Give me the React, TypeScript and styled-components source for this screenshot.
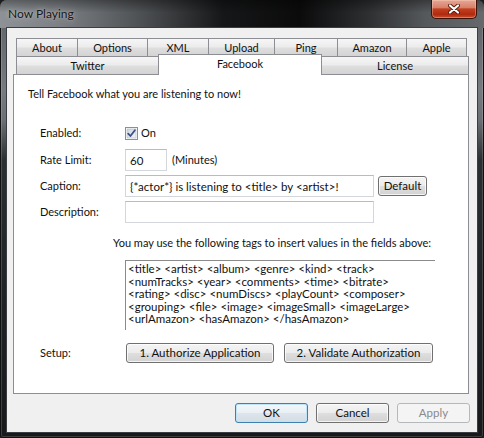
import React from "react";
import styled, { createGlobalStyle, css } from "styled-components";

const UI_FONT = `Lato, "Noto Sans", "DejaVu Sans", sans-serif`;

const Global = createGlobalStyle`
  html, body { margin: 0; padding: 0; background: #1b1d1f; }
  body {
    width: 484px;
    height: 438px;
    overflow: hidden;
    font-family: ${UI_FONT};
    font-size: 11px;
    color: #000;
  }
  #root { width: 484px; height: 438px; }
`;

const Window = styled.div`
  width: 484px;
  height: 438px;
  box-sizing: border-box;
  display: flex;
  flex-direction: column;
  border-radius: 7px 7px 3px 3px;
  overflow: hidden;
  background: linear-gradient(
    to bottom,
    #5b5f63 0px,
    #777b7f 90px,
    #6c7074 120px,
    #2c2f32 160px,
    #1f2225 300px,
    #17191b 438px
  );
  box-shadow: inset 0 0 0 1px #0e1012, inset 0 0 0 2px rgba(255, 255, 255, 0.16);
`;

const TitleBar = styled.div`
  height: 28px;
  flex: none;
  display: flex;
  align-items: flex-start;
  justify-content: space-between;
  padding: 0 7px 0 8px;
  background:
    linear-gradient(to bottom, rgba(0, 0, 0, 0.35) 0%, rgba(0, 0, 0, 0) 45%),
    linear-gradient(
      to right,
      #8e9296 0%,
      #7d8185 12%,
      #4b4e51 30%,
      #161718 46%,
      #0b0b0c 62%,
      #2d2f31 76%,
      #56595c 88%,
      #66696c 100%
    );
`;

const Caption = styled.div`
  margin-top: 6px;
  font-size: 12px;
  line-height: 16px;
  color: #151515;
  text-shadow: 0 0 6px rgba(255, 255, 255, 0.45), 0 0 2px rgba(255, 255, 255, 0.35);
`;

const CloseButton = styled.div`
  width: 46px;
  height: 19px;
  box-sizing: border-box;
  display: flex;
  align-items: center;
  justify-content: center;
  border: 1px solid #3a1208;
  border-top: none;
  border-radius: 0 0 5px 5px;
  background: linear-gradient(
    to bottom,
    #e6a896 0%,
    #d8806a 42%,
    #c2401f 50%,
    #b02a0f 80%,
    #c9502f 100%
  );
  box-shadow: inset 0 0 0 1px rgba(255, 220, 200, 0.35);
`;

const Client = styled.div`
  flex: 1;
  margin: 0 7px 6px 7px;
  background: #f0f0f0;
  display: flex;
  flex-direction: column;
  padding-top: 10px;
  box-shadow: 0 0 0 1px #3a3e42;
`;

const TabStrip = styled.div`
  margin-left: 9px;
  display: flex;
  flex-direction: column;
`;

const TabRow = styled.div`
  display: flex;
  height: 18px;
`;

const Tab = styled.div<{ $w: number; $active?: boolean }>`
  width: ${(p) => p.$w}px;
  box-sizing: border-box;
  flex: none;
  margin-left: -1px;
  &:first-child { margin-left: 0; }
  border: 1px solid #8c8e94;
  border-bottom: none;
  display: flex;
  align-items: center;
  justify-content: center;
  font-size: 11px;
  line-height: 14px;
  padding-top: 1px;
  color: #111;
  background: linear-gradient(
    to bottom,
    #f6f6f6 0%,
    #ececec 45%,
    #dedede 55%,
    #d3d3d3 100%
  );
  ${(p) =>
    p.$active &&
    css`
      position: relative;
      z-index: 2;
      background: #fff;
      margin-top: -2px;
      height: 21px;
      padding-bottom: 4px;
    `}
`;

const Panel = styled.div`
  margin-left: 6px;
  width: 456px;
  height: 320px;
  box-sizing: border-box;
  border: 1px solid #8c8e94;
  background: #fff;
  padding: 11px 0 0 14px;
  display: flex;
  flex-direction: column;
  color: #111;
`;

const Text = styled.div<{ $indent?: number; $mt?: number }>`
  font-size: 11px;
  line-height: 16px;
  margin-left: ${(p) => p.$indent ?? 0}px;
  margin-top: ${(p) => p.$mt ?? 0}px;
  white-space: nowrap;
`;

const Row = styled.div<{ $mt: number; $h?: number }>`
  display: flex;
  align-items: center;
  height: ${(p) => p.$h ?? 22}px;
  margin-top: ${(p) => p.$mt}px;
  padding-left: 12px;
`;

const Label = styled.div`
  width: 85px;
  flex: none;
  font-size: 11px;
  line-height: 16px;
`;

const Inline = styled.span<{ $ml: number }>`
  margin-left: ${(p) => p.$ml}px;
  font-size: 11px;
  line-height: 16px;
`;

const Field = styled.div<{ $w: number }>`
  width: ${(p) => p.$w}px;
  height: 22px;
  box-sizing: border-box;
  border: 1px solid #d3d6da;
  border-top-color: #b8bbc0;
  background: #fff;
  padding-left: 4px;
  display: flex;
  align-items: center;
  font-size: 11.5px;
  white-space: nowrap;
  overflow: hidden;
`;

const TagBox = styled.div`
  margin: 9px 0 0 97px;
  width: 310px;
  height: 70px;
  box-sizing: border-box;
  border-top: 1px solid #8a8a8a;
  border-left: 1px solid #8a8a8a;
  padding: 2px 0 0 2px;
  font-size: 11.5px;
  line-height: 12.6px;
  white-space: pre;
  overflow: hidden;
`;

const Button = styled.div<{ $w: number; $ml?: number; $variant?: "default" | "disabled" }>`
  width: ${(p) => p.$w}px;
  height: 20px;
  margin-left: ${(p) => p.$ml ?? 0}px;
  flex: none;
  box-sizing: border-box;
  border: 1px solid #707070;
  border-radius: 3px;
  display: flex;
  align-items: center;
  justify-content: center;
  font-size: 11.5px;
  line-height: 14px;
  color: #111;
  background: linear-gradient(
    to bottom,
    #f4f4f4 0%,
    #ececec 48%,
    #dedede 52%,
    #d2d2d2 100%
  );
  box-shadow: inset 0 0 0 1px rgba(255, 255, 255, 0.75);
  ${(p) =>
    p.$variant === "default" &&
    css`
      border-color: #3c7fb1;
      background: linear-gradient(
        to bottom,
        #f3f7fa 0%,
        #e9eff3 48%,
        #dde5eb 52%,
        #d3dde4 100%
      );
      box-shadow: inset 0 0 0 1px #bfe3f8;
    `}
  ${(p) =>
    p.$variant === "disabled" &&
    css`
      border-color: #b5b9bc;
      background: #f4f4f4;
      color: #8a8a8a;
      box-shadow: none;
    `}
`;

const Footer = styled.div`
  display: flex;
  justify-content: flex-end;
  gap: 8px;
  margin-top: 9px;
  padding-right: 7px;
`;

const CheckBox = () => (
  <svg width="13" height="13" viewBox="0 0 13 13">
    <defs>
      <linearGradient id="cbFill" x1="0" y1="0" x2="1" y2="1">
        <stop offset="0" stopColor="#cdd6e0" />
        <stop offset="1" stopColor="#f2f5f8" />
      </linearGradient>
    </defs>
    <rect x="0.5" y="0.5" width="12" height="12" fill="#fff" stroke="#8e8f8f" />
    <rect x="2" y="2" width="9" height="9" fill="url(#cbFill)" stroke="#b0b8c2" strokeWidth="0.6" />
    <path d="M3.2 6.6 L5.4 9 L9.9 3.2" fill="none" stroke="#3d4f86" strokeWidth="1.8" strokeLinecap="round" strokeLinejoin="round" />
  </svg>
);

const CloseGlyph = () => (
  <svg width="12" height="10" viewBox="0 0 12 10">
    <path d="M2 1.5 L10 8.5 M10 1.5 L2 8.5" stroke="#5a1a0c" strokeWidth="4" strokeLinecap="round" />
    <path d="M2 1.5 L10 8.5 M10 1.5 L2 8.5" stroke="#fff" strokeWidth="2.2" strokeLinecap="round" />
  </svg>
);

const topTabs: [string, number][] = [
  ["About", 62],
  ["Options", 71],
  ["XML", 62],
  ["Upload", 67],
  ["Ping", 64],
  ["Amazon", 70],
  ["Apple", 61],
];

const frontTabs: [string, number][] = [
  ["Twitter", 143],
  ["Facebook", 164],
  ["License", 148],
];

const tagLines = [
  "<title> <artist> <album> <genre> <kind> <track>",
  "<numTracks> <year> <comments> <time> <bitrate>",
  "<rating> <disc> <numDiscs> <playCount> <composer>",
  "<grouping> <file> <image> <imageSmall> <imageLarge>",
  "<urlAmazon> <hasAmazon> </hasAmazon>",
].join("\n");

export default function App() {
  return (
    <>
      <Global />
      <Window>
        <TitleBar>
          <Caption>Now Playing</Caption>
          <CloseButton>
            <CloseGlyph />
          </CloseButton>
        </TitleBar>
        <Client>
          <TabStrip>
            <TabRow>
              {topTabs.map(([name, w]) => (
                <Tab key={name} $w={w}>
                  {name}
                </Tab>
              ))}
            </TabRow>
            <TabRow>
              {frontTabs.map(([name, w]) => (
                <Tab key={name} $w={w} $active={name === "Facebook"}>
                  {name}
                </Tab>
              ))}
            </TabRow>
          </TabStrip>
          <Panel>
            <Text>Tell Facebook what you are listening to now!</Text>
            <Row $mt={20}>
              <Label>Enabled:</Label>
              <CheckBox />
              <Inline $ml={3}>On</Inline>
            </Row>
            <Row $mt={5}>
              <Label>Rate Limit:</Label>
              <Field $w={42}>60</Field>
              <Inline $ml={5}>(Minutes)</Inline>
            </Row>
            <Row $mt={4}>
              <Label>Caption:</Label>
              <Field $w={249}>{"{*actor*} is listening to <title> by <artist>!"}</Field>
              <Button $w={49} $ml={4}>
                Default
              </Button>
            </Row>
            <Row $mt={4}>
              <Label>Description:</Label>
              <Field $w={249} />
            </Row>
            <Text $indent={85} $mt={12}>
              You may use the following tags to insert values in the fields above:
            </Text>
            <TagBox>{tagLines}</TagBox>
            <Row $mt={13} $h={20}>
              <Label>Setup:</Label>
              <Button $w={148} $ml={1}>
                1. Authorize Application
              </Button>
              <Button $w={149} $ml={10}>
                2. Validate Authorization
              </Button>
            </Row>
          </Panel>
          <Footer>
            <Button $w={73} $variant="default">
              OK
            </Button>
            <Button $w={73}>Cancel</Button>
            <Button $w={73} $variant="disabled">
              Apply
            </Button>
          </Footer>
        </Client>
      </Window>
    </>
  );
}
